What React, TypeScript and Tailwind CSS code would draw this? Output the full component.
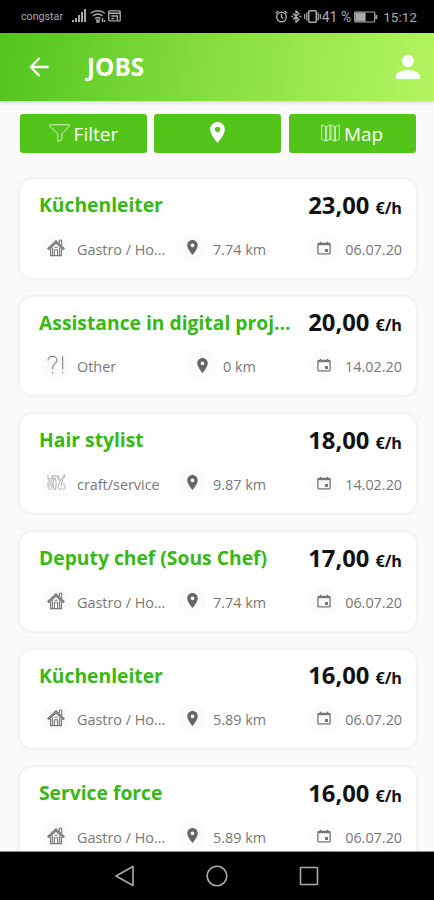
import { ReactNode } from "react";

type Category = "gastro" | "other" | "craft";

type Job = {
  title: string;
  price: string;
  category: Category;
  label: string;
  distance: string;
  date: string;
};

const jobs: Job[] = [
  { title: "Küchenleiter", price: "23,00", category: "gastro", label: "Gastro / Ho...", distance: "7.74 km", date: "06.07.20" },
  { title: "Assistance in digital proj...", price: "20,00", category: "other", label: "Other", distance: "0 km", date: "14.02.20" },
  { title: "Hair stylist", price: "18,00", category: "craft", label: "craft/service", distance: "9.87 km", date: "14.02.20" },
  { title: "Deputy chef (Sous Chef)", price: "17,00", category: "gastro", label: "Gastro / Ho...", distance: "7.74 km", date: "06.07.20" },
  { title: "Küchenleiter", price: "16,00", category: "gastro", label: "Gastro / Ho...", distance: "5.89 km", date: "06.07.20" },
  { title: "Service force", price: "16,00", category: "gastro", label: "Gastro / Ho...", distance: "5.89 km", date: "06.07.20" },
];

const PinIcon = ({ className }: { className: string }) => (
  <svg viewBox="5 2 14 20" className={className} fill="currentColor">
    <path d="M12 2C8.13 2 5 5.13 5 9c0 5.25 7 13 7 13s7-7.75 7-13c0-3.87-3.13-7-7-7zm0 9.5a2.5 2.5 0 1 1 0-5 2.5 2.5 0 0 1 0 5z" />
  </svg>
);

const HouseIcon = () => (
  <svg viewBox="0 0 18 18" className="h-[18px] w-[18px]" fill="none" stroke="#777" strokeWidth="1.1">
    <path d="M.8 9.4 9 1.8l8.2 7.6-1 1L9 4 1.8 10.4z" fill="#aaa" />
    <path d="M12.4 4.4V1.3h2.3v5.2" />
    <path d="M3.6 9.4v7.2h10.8V9.4M5.4 8.4v7.8M12.6 8.4v7.8" />
    <path d="M7.4 16.4v-5.6h3.2v5.6M7.4 8.2h3.2" />
  </svg>
);

const QuestionIcon = () => (
  <svg viewBox="0 0 18 20" className="h-5 w-[18px]" fill="none" stroke="#858585" strokeWidth="1.1">
    <path d="M1 5.4C1 2.8 3 1.4 5.5 1.4S10 3 10 5.2c0 3.4-4.3 3.6-4.3 7v2.2M5.7 16.8v1.6M15.6 1.2v13.2M15.6 16.8v1.6" />
  </svg>
);

const ToolsIcon = () => (
  <svg viewBox="0 0 19 17" className="h-[17px] w-[19px]" fill="none" stroke="#aaa" strokeWidth=".9">
    <path d="M1 1.2v4l1.5 2-1.4 1.4v5.2l2 1.8 2-1.8V8.6L3.9 7.2l1.3-2v-4M1 4.6h4M3.1 8v5" />
    <circle cx="7.4" cy="3" r="1.6" />
    <path d="M6.4 5.6h2.4l.4 4-.6 6H6.8l-.5-6z" />
    <path d="m10.6 1.2 2.8 5.3 3.6-5.3h1.2L14.6 8.2v4.4M10.6 1.2v3l2.2 4-1.6 3.2v3l1.4 1.2 1.7-1.4M15.8 8.8l2 2.6v3l-1.7 1.2-1.5-1.5" />
  </svg>
);

const CalendarIcon = () => (
  <svg viewBox="0 0 14 14" className="h-3.5 w-3.5" fill="none" stroke="#757575" strokeWidth="1.3">
    <rect x=".9" y="2.3" width="12.2" height="10.6" rx="1" />
    <path d="M1 3.2h12" strokeWidth="2" />
    <path d="M3.6.7v2M10.4.7v2" />
    <path d="M8 8h3v3H8z" fill="#757575" stroke="none" />
  </svg>
);

const categoryIcons: Record<Category, ReactNode> = {
  gastro: <HouseIcon />,
  other: <QuestionIcon />,
  craft: <ToolsIcon />,
};

const Meta = ({ icon, children }: { icon: ReactNode; children: ReactNode }) => (
  <div className="flex items-center">
    <span className="flex h-[30px] w-[30px] shrink-0 items-center justify-center rounded-full bg-[#fbfbfb] text-[#666]">{icon}</span>
    <span className="ml-1.5 pt-1 text-[14.4px] leading-5 whitespace-nowrap text-[#777]">{children}</span>
  </div>
);

const JobCard = ({ job }: { job: Job }) => (
  <div className="h-[98.6px] shrink-0 rounded-[13px] bg-white pt-3 pr-[13.5px] pl-[19px] shadow-[0_0_2px_1.5px_#f2f2f2]">
    <div className="flex h-[29px] items-center justify-between whitespace-nowrap">
      <h2 className="text-[19.3px] font-bold text-[#38b814]">{job.title}</h2>
      <p className="text-[23.8px] font-bold text-[#111]">
        {job.price}
        <span className="ml-1.5 text-[16.2px]">€/h</span>
      </p>
    </div>
    <div className="mt-[12.5px] grid grid-cols-[136px_1fr_136px] pl-0.5">
      <Meta icon={categoryIcons[job.category]}>{job.label}</Meta>
      <div className="flex justify-center">
        <Meta icon={<PinIcon className="h-[15px] w-[11px]" />}>{job.distance}</Meta>
      </div>
      <div className="flex justify-end">
        <Meta icon={<CalendarIcon />}>{job.date}</Meta>
      </div>
    </div>
  </div>
);

const StatusBar = () => (
  <div className="flex h-[33px] shrink-0 items-center justify-between bg-black pr-[17px] pl-[21px] font-[Roboto] text-[#aaa]">
    <div className="flex items-center">
      <span className="w-[51px] pt-0.5 text-[10.7px]">congstar</span>
      <svg viewBox="0 0 15 14" className="h-3.5 w-[15px]" fill="currentColor">
        <path d="M0 11h2v2H0zM3 9h2v4H3zM6 6h2v7H6zM9 3h2v10H9zM12 0h2v13h-2z" />
      </svg>
      <svg viewBox="0 0 16 14" className="ml-[3px] h-3.5 w-4" fill="none" stroke="currentColor" strokeWidth="1.4">
        <path d="M.8 4.3c4-3.5 10-3.5 14 0M3 7c3-2.5 6.7-2.5 9.6 0M5.2 9.6c1.7-1.3 3.6-1.3 5.2 0" />
        <path d="M7 11h2v2H7zM12.5 9v4M14.5 11v2" />
      </svg>
      <svg viewBox="0 0 13 12" className="ml-0.5 h-3 w-[13px]" fill="none" stroke="currentColor" strokeWidth="1.4">
        <rect x=".8" y=".9" width="11.4" height="10" rx="1" />
        <path d="M1 3.2h11M3.3 6h6v4M3.3 8.5h3" />
      </svg>
    </div>
    <div className="flex items-center">
      <svg viewBox="0 0 13 13" className="h-[13px] w-[13px]" fill="none" stroke="currentColor" strokeWidth="1.4">
        <circle cx="6.5" cy="7" r="4.8" />
        <path d="M6.5 4v3.3l2 1.2M.6 3.3 3.4 1M12.4 3.3 9.6 1" />
      </svg>
      <svg viewBox="0 0 11 13" className="ml-[3px] h-[13px] w-[11px]" fill="none" stroke="currentColor" strokeWidth="1.3">
        <path d="m2 3.5 6 6-3 2.7V.8l3 2.7-6 6M.3 6.5h1.7M8.5 6.5h2" />
      </svg>
      <svg viewBox="0 0 17 13" className="ml-0.5 h-[13px] w-[17px]" fill="none" stroke="currentColor" strokeWidth="1.6">
        <rect x="4.7" y=".8" width="7.6" height="11.4" rx="1" />
        <path d="M2.8 2.5v8M14.2 2.5v8M.7 4v5M16.3 4v5" strokeWidth="1.2" />
      </svg>
      <span className="ml-px pt-px text-[14px] whitespace-nowrap">41 %</span>
      <svg viewBox="0 0 24 12" className="ml-[3px] h-3 w-6" fill="none" stroke="currentColor" strokeWidth="1.2">
        <rect x=".7" y="1" width="20" height="10" rx="1" />
        <path d="M2 2.2h9v7.6H2z" fill="currentColor" />
        <path d="M22.3 4v4" strokeWidth="1.8" />
      </svg>
      <span className="ml-[5px] pt-px text-[13.6px]">15:12</span>
    </div>
  </div>
);

const Header = () => (
  <header className="z-10 flex h-[68px] shrink-0 items-center bg-linear-[100deg,#52c41e,#8ae040_52%,#b4f560] pr-[14px] pl-[29px] text-white shadow-[0_1px_4px_#0003]">
    <svg viewBox="0 0 20 20" className="h-5 w-5" fill="none" stroke="currentColor" strokeWidth="2.3">
      <path d="M19.5 10H2M10.5 1 1.8 10l8.7 9" />
    </svg>
    <h1 className="ml-[38px] pt-px text-[24.3px] font-bold">JOBS</h1>
    <svg viewBox="4 4 16 16" className="ml-auto h-6 w-6" fill="currentColor">
      <path d="M12 12c2.21 0 4-1.79 4-4s-1.79-4-4-4-4 1.79-4 4 1.79 4 4 4zm0 2c-2.67 0-8 1.34-8 4v2h16v-2c0-2.66-5.33-4-8-4z" />
    </svg>
  </header>
);

const ActionButton = ({ children }: { children: ReactNode }) => (
  <button className="flex h-[39px] items-center justify-center rounded-[3px] bg-[#52c41a] text-[19px] text-white">{children}</button>
);

const Toolbar = () => (
  <div className="grid grid-cols-3 gap-[7.5px]">
    <ActionButton>
      <svg viewBox="0 0 21 18" className="-mt-0.5 h-[18px] w-[21px]" fill="none" stroke="#d8f3c8" strokeWidth="1">
        <path d="M.8.8h19.4v1.5l-7.3 7.4v5.8l-4 1.9V9.7L.8 2.3z" />
      </svg>
      <span className="ml-1 pt-0.5">Filter</span>
    </ActionButton>
    <ActionButton>
      <PinIcon className="-mt-0.5 h-[21px] w-[15px]" />
    </ActionButton>
    <ActionButton>
      <svg viewBox="0 0 19 18" className="-mt-0.5 h-[18px] w-[19px]" fill="none" stroke="#d8f3c8" strokeWidth=".9">
        <path d="m.7.8 4.4 2L9.5.8l4.4 2 4.4-2v14.4l-4.4 2-4.4-2-4.4 2-4.4-2zM4.5 2.8v14M5.7 2.8v14M8.9.8v14.4M10.1.8v14.4M13.3 2.8v14M14.5 2.8v14" />
      </svg>
      <span className="ml-1 pt-0.5">Map</span>
    </ActionButton>
  </div>
);

const NavigationBar = () => (
  <nav className="flex h-[49px] shrink-0 items-center justify-center gap-[70px] border-t border-[#888] bg-black text-[#aaa]">
    <svg viewBox="0 0 22 22" className="h-[22px] w-[22px]" fill="none" stroke="currentColor" strokeWidth="1.6">
      <path d="M19 1.5v19L2 11z" strokeLinejoin="round" />
    </svg>
    <svg viewBox="0 0 22 22" className="h-[22px] w-[22px]" fill="none" stroke="currentColor" strokeWidth="1.6">
      <circle cx="11" cy="11" r="9.8" />
    </svg>
    <svg viewBox="0 0 22 22" className="h-[22px] w-[22px]" fill="none" stroke="currentColor" strokeWidth="1.6">
      <rect x="2.5" y="2.5" width="17" height="17" rx=".5" />
    </svg>
  </nav>
);

export default function App() {
  return (
    <div className="flex h-[900px] w-[434px] flex-col overflow-hidden bg-[#fafafa] font-['Open_Sans',sans-serif]">
      <StatusBar />
      <Header />
      <main className="min-h-0 flex-1 overflow-hidden pt-[13px] pr-[18.5px] pl-5">
        <Toolbar />
        <div className="mt-[26px] flex flex-col gap-[19.1px]">
          {jobs.map((job, index) => (
            <JobCard key={index} job={job} />
          ))}
        </div>
      </main>
      <NavigationBar />
    </div>
  );
}
